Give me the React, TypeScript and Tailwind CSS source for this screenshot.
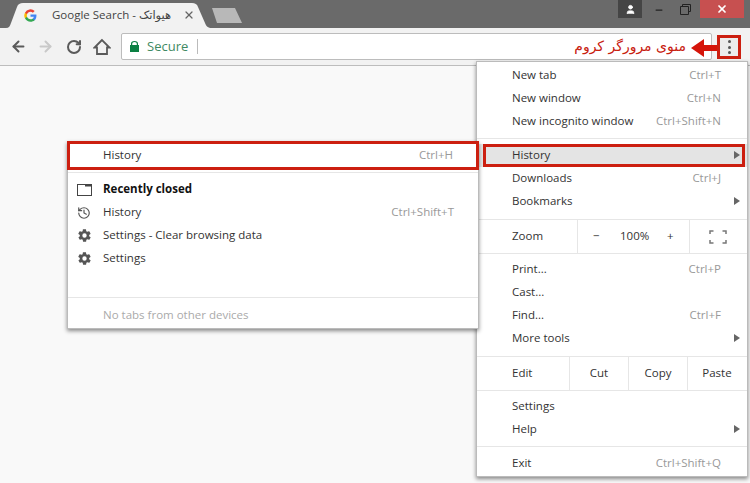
import { ArrowLeft, ArrowRight, RotateCw, X, Minus, History, User } from "lucide-react";

const font = { fontFamily: '"Open Sans", "DejaVu Sans", sans-serif' };

const MenuRow = ({ label, hint, arrow, active }: { label: string; hint?: string; arrow?: boolean; active?: boolean }) => (
  <div className={`flex h-[23px] items-center pb-[2px] pl-[35px] pr-[26px] text-[11.5px] text-[#333] relative ${active ? "bg-[#e4e4e4]" : ""}`}>
    <span className="flex-1">{label}</span>
    {hint && <span className="text-[#999]">{hint}</span>}
    {arrow && <span className="absolute right-[7px] top-[7px] w-0 h-0 border-y-[4px] border-y-transparent border-l-[6px] border-l-[#666]" />}
  </div>
);

const Sep = () => <div className="my-[5px] h-px bg-[#e6e6e6]" />;

const Gear = () => (
  <svg width="15" height="15" viewBox="0 0 24 24" fill="#555">
    <path d="M19.4 13c.1-.3.1-.7.1-1s0-.7-.1-1l2.1-1.6c.2-.2.2-.4.1-.6l-2-3.5c-.1-.2-.4-.3-.6-.2l-2.5 1c-.5-.4-1.100-.7-1.700-1l-.4-2.600c0-.3-.2-.4-.5-.4h-4c-.3 0-.5.100-.5.400l-.4 2.600c-.6.300-1.200.6-1.700 1l-2.500-1c-.2-.1-.5 0-.6.200l-2 3.500c-.1.200-.1.400.1.600L4.600 11c-.1.300-.1.700-.1 1s0 .7.100 1l-2.100 1.600c-.2.200-.2.400-.1.600l2 3.500c.1.200.4.300.6.200l2.500-1c.5.400 1.100.7 1.700 1l.4 2.600c0 .3.200.4.500.4h4c.3 0 .5-.1.500-.4l.4-2.600c.6-.3 1.200-.6 1.700-1l2.500 1c.2.100.5 0 .6-.2l2-3.500c.1-.2.100-.4-.1-.6L19.400 13zM12 15.500a3.500 3.500 0 1 1 0-7 3.500 3.500 0 0 1 0 7z" />
  </svg>
);

const HistoryRow = ({ icon, label, hint, bold }: { icon: React.ReactNode; label: string; hint?: string; bold?: boolean }) => (
  <div className="flex h-[23px] items-center pl-[9px] pr-[24px] text-[11.5px] text-[#333]">
    <span className="flex w-[26px] items-center">{icon}</span>
    <span className={`flex-1 pb-[2px] ${bold ? "font-bold text-[#111]" : ""}`}>{label}</span>
    {hint && <span className="pb-[2px] text-[#999]">{hint}</span>}
  </div>
);

const Cell = ({ children, w }: { children: React.ReactNode; w: string }) => (
  <div className={`flex h-full items-center justify-center border-l border-[#e6e6e6] pb-[2px] text-[11.5px] text-[#333] ${w}`}>{children}</div>
);

export default function App() {
  return (
    <div className="relative w-[750px] h-[483px] overflow-hidden bg-[#f9f9f9]" style={font}>
      {/* tab strip */}
      <div className="relative flex h-[28px] bg-[#6a6a6a]">
        <svg className="absolute left-[6px] top-[2px]" width="240" height="26" viewBox="0 0 240 26">
          <path d="M0 26 C3 26 4 24 5 21 L11 5 C12 2 14 1 17 1 L186 1 C189 1 191 2 192 5 L199 21 C200 24 202 26 206 26 Z" fill="#f2f2f2" />
          <path d="M206 6 L229 6 L236 21 L211 21 Z" fill="#b8b8b8" />
        </svg>
        <div className="relative flex h-full items-center pt-[2px] pl-[24px]">
          <svg width="13" height="13" viewBox="0 0 24 24">
            <path d="M23 12.300c0-.8-.1-1.600-.2-2.300H12v4.400h6.200a5.300 5.300 0 0 1-2.300 3.500v2.900h3.700c2.200-2 3.400-5 3.400-8.500z" fill="#4285f4" />
            <path d="M12 23.500c3.100 0 5.700-1 7.600-2.800l-3.700-2.900c-1 .7-2.300 1.100-3.900 1.100-3 0-5.500-2-6.400-4.700H1.800v3A11.500 11.500 0 0 0 12 23.500z" fill="#34a853" />
            <path d="M5.600 14.200a6.900 6.900 0 0 1 0-4.400v-3H1.800a11.500 11.500 0 0 0 0 10.400l3.800-3z" fill="#fbbc05" />
            <path d="M12 5.100c1.700 0 3.200.6 4.400 1.700l3.300-3.300A11.500 11.500 0 0 0 1.800 6.800l3.800 3C6.500 7.100 9 5.100 12 5.100z" fill="#ea4335" />
          </svg>
          <span className="ml-[15px] w-[129px] whitespace-nowrap text-[11.5px] text-[#444]">Google Search - هیواتک</span>
          <X size={12} strokeWidth={2.5} className="ml-[2px] text-[#666]" />
        </div>
        <div className="ml-auto mr-[6px] flex">
          <div className="flex h-[18px] w-[24px] items-center justify-center bg-[#454545]">
            <User size={11} fill="#fff" className="text-white" />
          </div>
          <div className="flex h-[18px] w-[34px] items-center justify-center">
            <Minus size={10} strokeWidth={3} className="mt-[2px] text-[#222]" />
          </div>
          <div className="flex h-[18px] w-[18px] items-center justify-center">
            <svg width="11" height="11" viewBox="0 0 11 11" fill="none" stroke="#222">
              <path d="M2.500 2.500V.5h8v7H8.500M.5 2.500h8v8h-8z" />
            </svg>
          </div>
          <div className="ml-[6px] flex h-[18px] w-[44px] items-center justify-center bg-[#c75050]">
            <X size={12} strokeWidth={3.5} className="text-white" />
          </div>
        </div>
      </div>

      {/* toolbar */}
      <div className="flex h-[38px] items-center border-b border-[#bdbdbd] bg-[#f2f2f2] pl-[10px] pr-[5px]">
        <ArrowLeft size={17} strokeWidth={2.8} className="text-[#5a5a5a]" />
        <ArrowRight size={17} strokeWidth={2.8} className="ml-[10px] text-[#c9c9c9]" />
        <RotateCw size={16} strokeWidth={3} className="ml-[12px] text-[#5a5a5a]" />
        <svg className="ml-[11px]" width="18" height="18" viewBox="0 0 18 18" fill="none" stroke="#5a5a5a" strokeWidth="1.800" strokeLinejoin="miter">
          <path d="M9 2 L1.500 9.500 H4 V16 H14 V9.500 H16.500 Z" />
        </svg>
        <div className="ml-[10px] flex h-[27px] w-[591px] items-center rounded-[2px] border border-[#bcbcbc] bg-white pl-[8px]">
          <svg width="9" height="11" viewBox="0 0 9 11" fill="#0b8043">
            <path d="M0 4h1V2.800a3.500 2.800 0 0 1 7 0V4h1v7H0zM2.200 4h4.600V2.800a2.300 1.800 0 0 0-4.600 0z" />
          </svg>
          <span className="ml-[8px] text-[13px] text-[#3f8a63]">Secure</span>
          <span className="ml-[9px] h-[15px] w-px bg-[#bbb]" />
          <span dir="rtl" className="ml-auto mr-[25px] text-[14px] text-[#c8200f]" style={{ fontFamily: '"DejaVu Sans", sans-serif' }}>
            منوی مرورگر کروم
          </span>
        </div>
      </div>

      {/* callout arrow */}
      <svg className="absolute left-[690px] top-[38px]" width="28" height="20" viewBox="0 0 28 20">
        <path d="M1 10 L14 1 V7 H28 V13 H14 V19 Z" fill="#d5150a" />
      </svg>
      <div className="absolute left-[717px] top-[35px] flex h-[24px] w-[24px] flex-col items-center justify-center gap-[2.500px] border-[3px] border-[#cc1f10] bg-[#ececec]">
        <i className="h-[3px] w-[3px] rounded-full bg-[#555]" />
        <i className="h-[3px] w-[3px] rounded-full bg-[#555]" />
        <i className="h-[3px] w-[3px] rounded-full bg-[#555]" />
      </div>

      {/* main menu */}
      <div className="absolute left-[476px] top-[61px] h-[416px] w-[272px] border border-[#bbb] bg-white pt-[2px] shadow-[0_2px_4px_rgba(0,0,0,0.45)]">
        <MenuRow label="New tab" hint="Ctrl+T" />
        <MenuRow label="New window" hint="Ctrl+N" />
        <MenuRow label="New incognito window" hint="Ctrl+Shift+N" />
        <Sep />
        <MenuRow label="History" arrow active />
        <MenuRow label="Downloads" hint="Ctrl+J" />
        <MenuRow label="Bookmarks" arrow />
        <div className="mt-[6px] flex h-[35px] items-center border-y border-[#e6e6e6] pl-[35px] text-[11.5px] text-[#333]">
          <span className="w-[65px] pb-[2px]">Zoom</span>
          <div className="flex h-full w-[113px] items-center border-x border-[#e6e6e6] pb-[2px] pl-[15px] pr-[5px]">
            <span className="w-[27px]">−</span>
            <span className="w-[47px]">100%</span>
            <span>+</span>
          </div>
          <svg className="ml-[19px]" width="18" height="14" viewBox="0 0 18 14" fill="none" stroke="#777" strokeWidth="1.500">
            <path d="M1 4V1h3.500M13.500 1H17v3M17 10v3h-3.500M4.500 13H1v-3" />
          </svg>
        </div>
        <div className="mt-[4px]">
          <MenuRow label="Print..." hint="Ctrl+P" />
          <MenuRow label="Cast..." />
          <MenuRow label="Find..." hint="Ctrl+F" />
          <MenuRow label="More tools" arrow />
        </div>
        <div className="mt-[6px] flex h-[35px] items-center border-y border-[#e6e6e6] pl-[35px] text-[11.5px] text-[#333]">
          <span className="w-[57px] pb-[2px]">Edit</span>
          <Cell w="w-[59px]">Cut</Cell>
          <Cell w="w-[59px]">Copy</Cell>
          <Cell w="w-[59px]">Paste</Cell>
        </div>
        <div className="mt-[4px]">
          <MenuRow label="Settings" />
          <MenuRow label="Help" arrow />
        </div>
        <Sep />
        <MenuRow label="Exit" hint="Ctrl+Shift+Q" />
      </div>
      <div className="absolute left-[483px] top-[144px] h-[23px] w-[262px] border-[3px] border-[#cc1f10]" />

      {/* history submenu */}
      <div className="absolute left-[67px] top-[141px] h-[188px] w-[412px] border border-[#bbb] bg-white shadow-[0_2px_4px_rgba(0,0,0,0.45)]">
        <div className="-mx-px -mt-px flex h-[29px] items-center justify-between border-[3px] border-[#cc1f10] pb-[2px] pl-[33px] pr-[23px] text-[11.5px] text-[#333]">
          <span>History</span>
          <span className="text-[#999]">Ctrl+H</span>
        </div>
        <div className="mt-[2px] h-px bg-[#e6e6e6]" />
        <div className="mt-[5px]">
          <HistoryRow
            bold
            label="Recently closed"
            icon={
              <svg width="15" height="12" viewBox="0 0 15 12" fill="none" stroke="#444" strokeWidth="1">
                <rect x=".5" y=".5" width="14" height="11" />
                <path d="M8 1.500h6.500" strokeWidth="2" />
              </svg>
            }
          />
          <HistoryRow label="History" hint="Ctrl+Shift+T" icon={<History size={14} className="text-[#555]" />} />
          <HistoryRow label="Settings - Clear browsing data" icon={<Gear />} />
          <HistoryRow label="Settings" icon={<Gear />} />
        </div>
        <div className="mt-[27px] h-px bg-[#e6e6e6]" />
        <div className="flex h-[36px] items-center pb-[2px] pl-[35px] text-[11.5px] text-[#aaa]">No tabs from other devices</div>
      </div>
    </div>
  );
}
